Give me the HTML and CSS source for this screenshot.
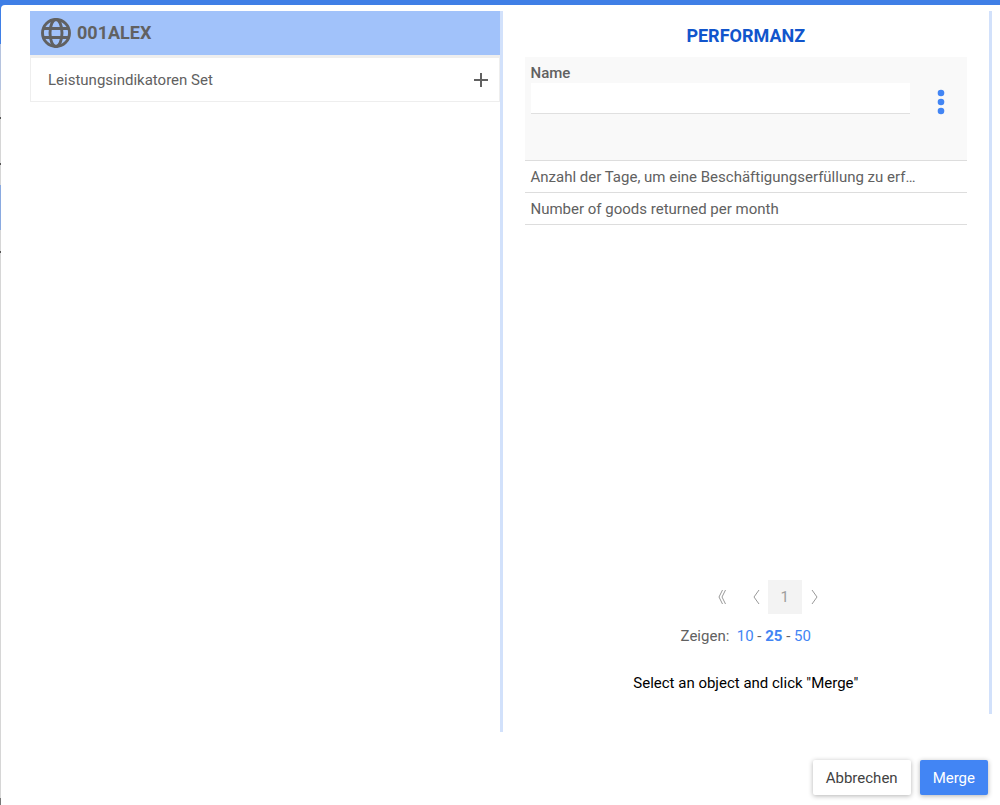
FILE: index.html
```
<!DOCTYPE html>
<html lang="de">
<head>
    <meta charset="UTF-8">
    <meta name="viewport" content="width=device-width, initial-scale=1.0">
    <title>Performanz</title>
    <link rel="stylesheet" href="styles.css">
</head>
<body>
    <div class="modal">
        <div class="columns">
            <!-- Baum -->
            <div class="tree">
                <div class="tree-header">
                    <svg class="globe" viewBox="0 0 30 30" fill="none" stroke="#616161" stroke-width="2.9">
                        <circle cx="15" cy="15" r="13.5"/>
                        <ellipse cx="15" cy="15" rx="6" ry="13.5"/>
                        <path d="M2.5 10.5h25M2.5 19.5h25"/>
                    </svg>
                    <span>001ALEX</span>
                </div>
                <div class="tree-item">
                    <span>Leistungsindikatoren Set</span>
                    <button class="icon-button" aria-label="+">
                        <svg width="14" height="14" viewBox="0 0 14 14" stroke="#616161" stroke-width="2">
                            <path d="M7 0v14M0 7h14"/>
                        </svg>
                    </button>
                </div>
            </div>

            <!-- Liste -->
            <div class="list">
                <h2>PERFORMANZ</h2>
                <div class="filter">
                    <div class="filter-field">
                        <label for="name">Name</label>
                        <input type="text" id="name">
                    </div>
                    <button class="icon-button" aria-label="Menu">
                        <svg width="8" height="26" viewBox="0 0 8 26" fill="#4285f4">
                            <circle cx="4" cy="4" r="3.3"/>
                            <circle cx="4" cy="13" r="3.3"/>
                            <circle cx="4" cy="22" r="3.3"/>
                        </svg>
                    </button>
                </div>
                <div class="rows">
                    <table>
                        <tr><td>Anzahl der Tage, um eine Beschäftigungserfüllung zu erfüllen</td></tr>
                        <tr><td>Number of goods returned per month</td></tr>
                    </table>
                </div>
                <div class="pager">
                    <button class="page prev" aria-label="First">
                        <svg width="10" height="16" viewBox="0 0 10 16"><path d="M5.500 1L2 8L5.500 15M8.500 1L5 8L8.500 15"/></svg>
                    </button>
                    <button class="page prev" aria-label="Previous">
                        <svg width="10" height="16" viewBox="0 0 10 16"><path d="M8 1L3 8L8 15"/></svg>
                    </button>
                    <button class="page active">1</button>
                    <button class="page next" aria-label="Next">
                        <svg width="10" height="16" viewBox="0 0 10 16"><path d="M3 1L8 8L3 15"/></svg>
                    </button>
                </div>
                <div class="sizes">Zeigen:&nbsp; <a href="#">10</a> - <a href="#" class="selected">25</a> - <a href="#">50</a></div>
                <p class="hint">Select an object and click "Merge"</p>
            </div>
        </div>

        <div class="actions">
            <button class="button">Abbrechen</button>
            <button class="button primary">Merge</button>
        </div>
    </div>
</body>
</html>
```

FILE: styles.css
```
* {
    box-sizing: border-box;
}
body {
    margin: 0;
    min-height: 100vh;
    padding: 5px 0 0 1px;
    display: flex;
    font-family: Roboto, sans-serif;
    font-size: 15px;
    line-height: 20px;
    color: #616161;
    /* top bar and the page behind the dialog */
    background:
        linear-gradient(#3f7fe6, #3f7fe6) 0 0 / 100% 44px no-repeat,
        linear-gradient(#b5c3de, #b5c3de) 0 44px / 100% 46px no-repeat,
        linear-gradient(#555, #555) 0 117px / 100% 2px no-repeat,
        linear-gradient(#555, #555) 0 163px / 100% 2px no-repeat,
        linear-gradient(#8aaae0, #8aaae0) 0 185px / 100% 45px no-repeat,
        linear-gradient(#555, #555) 0 251px / 100% 2px no-repeat,
        linear-gradient(#777, #777) 0 100% / 100% 7px no-repeat,
        #d6d6d6;
}
button, input {
    font: inherit;
}
button {
    border: none;
    cursor: pointer;
}
svg {
    display: block;
}
.modal {
    flex: 1;
    background-color: #fff;
    border-top-left-radius: 4px;
    padding: 6px 8px 10px 29px;
}
.columns {
    display: grid;
    grid-template-columns: 473fr 490fr;
    align-items: start;
}

/* Baum */
.tree {
    min-height: 721px;
    border-right: 3px solid #d2e1fb;
}
.tree-header {
    display: flex;
    align-items: center;
    gap: 6px;
    height: 44px;
    padding-left: 11px;
    background-color: #a1c2fa;
    font-size: 18px;
    font-weight: bold;
}
.globe {
    width: 30px;
    height: 30px;
}
.tree-item {
    display: flex;
    align-items: center;
    justify-content: space-between;
    height: 47px;
    padding: 0 11px 0 17px;
    border: 1px solid #eee;
    border-top: 3px solid #eee;
}
.icon-button {
    padding: 0;
    background: none;
}

/* Liste */
.list {
    padding: 0 22px;
    border-right: 3px solid #d2e1fb;
}
h2 {
    margin: 0;
    padding: 15px 0 11px;
    color: #1155cc;
    font-size: 18px;
    line-height: 20px;
    text-align: center;
}
.filter {
    display: flex;
    justify-content: space-between;
    height: 104px;
    padding: 6px 22px 12px 6px;
    background-color: #f9f9f9;
    border-bottom: 1px solid #ddd;
}
.filter .icon-button {
    align-self: flex-start;
    margin-top: 26px;
}
.filter-field {
    flex: 0 1 379px;
}
.filter label {
    display: block;
    font-weight: 500;
}
.filter input {
    display: block;
    width: 100%;
    height: 31px;
    border: none;
    border-bottom: 1px solid #e0e0e0;
    background-color: #fff;
}
.rows {
    min-height: 419px;
}
table {
    width: 100%;
    table-layout: fixed;
    border-collapse: collapse;
}
td {
    padding: 6px 48px 5px 6px;
    border-bottom: 1px solid #ddd;
    overflow: hidden;
    white-space: nowrap;
    text-overflow: ellipsis;
}
.pager {
    display: flex;
    justify-content: center;
    padding-left: 34px;
}
.page {
    display: flex;
    align-items: center;
    justify-content: center;
    width: 34px;
    height: 34px;
    padding: 0;
    background: none;
    color: #9e9e9e;
}
.page svg {
    fill: none;
    stroke: #999;
}
.page.active {
    background-color: #f3f3f3;
}
.page.prev {
    justify-content: flex-end;
    padding-right: 7px;
}
.page.next {
    width: 24px;
}
.sizes {
    margin-top: 12px;
    text-align: center;
}
.sizes a {
    color: #4285f4;
    text-decoration: none;
}
.sizes .selected {
    font-weight: bold;
}
.hint {
    margin: 0;
    padding: 27px 0 21px;
    color: #000;
    text-align: center;
}

/* Aktionen */
.actions {
    display: flex;
    justify-content: flex-end;
    gap: 9px;
    margin: 28px 4px 0 0;
}
.button {
    height: 35px;
    padding: 0 13px;
    border-radius: 2px;
    background-color: #fff;
    color: #424242;
    box-shadow: 0 1px 5px rgba(0, 0, 0, 0.3);
}
.button.primary {
    background-color: #4285f4;
    color: #fff;
}
```
